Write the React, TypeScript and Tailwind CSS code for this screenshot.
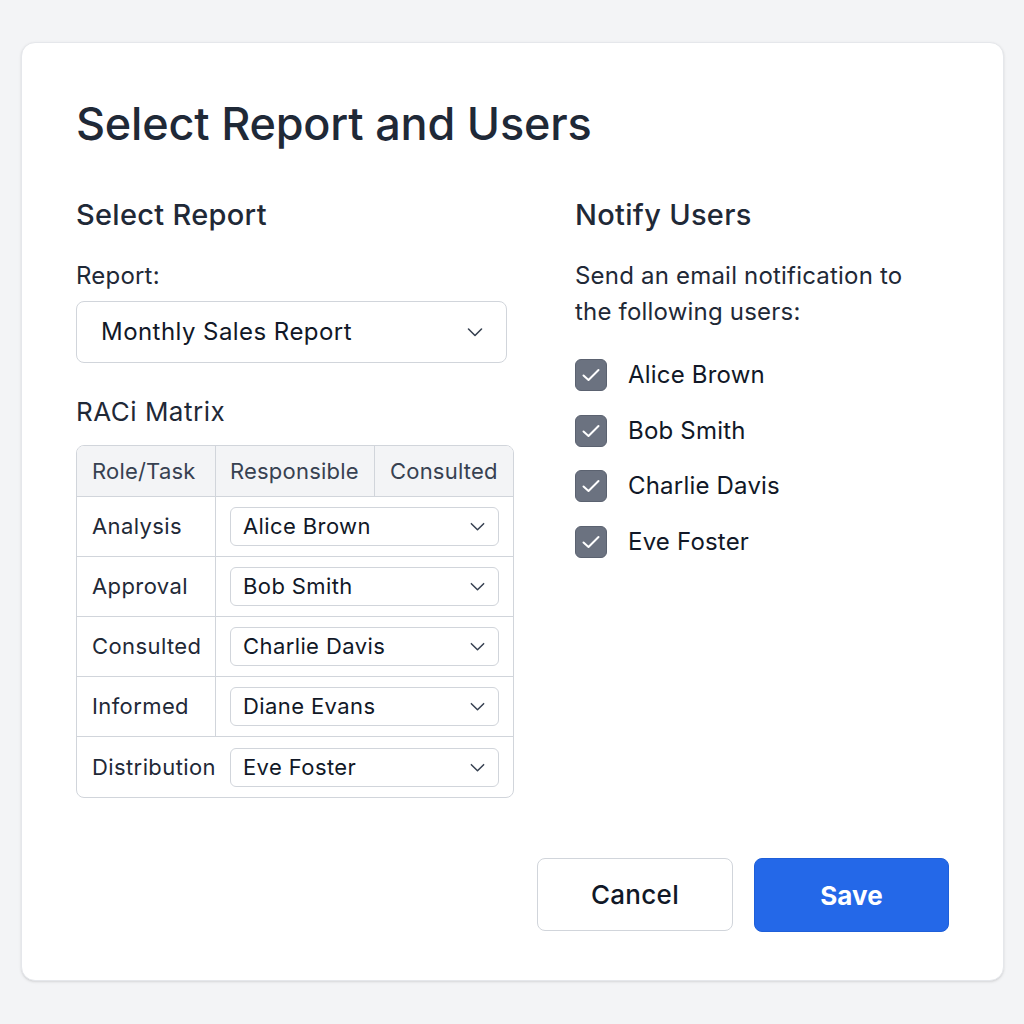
import React from 'react';

const font = {fontFamily: 'Inter, "Noto Sans", sans-serif'};

function Chevron({size = 18}: {size?: number}) {
    return (
        <svg width={size} height={size} viewBox="0 0 18 18" fill="none" stroke="#374151" strokeWidth="1.6" strokeLinecap="round" strokeLinejoin="round">
            <path d="M2.5 6 L9 12.5 L15.5 6"/>
        </svg>
    );
}

function Check() {
    return (
        <div className="w-8 h-8 rounded-[6px] bg-[#6b7280] border border-[#5b6270] flex items-center justify-center shrink-0">
            <svg width="22" height="22" viewBox="0 0 22 22" fill="none" stroke="white" strokeWidth="2" strokeLinecap="round" strokeLinejoin="round">
                <path d="M3.5 11.5 L8.5 16 L18.5 6"/>
            </svg>
        </div>
    );
}

const rows = [
    {task: "Analysis", user: "Alice Brown"},
    {task: "Approval", user: "Bob Smith"},
    {task: "Consulted", user: "Charlie Davis"},
    {task: "Informed", user: "Diane Evans"},
    {task: "Distribution", user: "Eve Foster"},
];

const notify = ["Alice Brown", "Bob Smith", "Charlie Davis", "Eve Foster"];

export default function App() {
    return (
        <div className="min-h-screen bg-[#f3f4f6] pt-[42px] pb-[43px] pl-[21px] pr-[20px]" style={font}>
            <div className="bg-white rounded-[14px] border border-[#e5e7eb] shadow-sm h-[939px] pt-[55px] pl-[54px] pr-[54px] flex flex-col">
                <h1 className="text-[45px] leading-[52px] font-medium text-[#1f2937] tracking-[-0.2px]">Select Report and Users</h1>
                <div className="flex mt-[48px]">
                    <div className="w-[438px]">
                        <h2 className="text-[29px] leading-[34px] font-medium text-[#1f2937] tracking-[0.3px]">Select Report</h2>
                        <div className="mt-[30px] text-[24px] leading-[28px] text-[#1f2937] tracking-[0.2px]">Report:</div>
                        <div className="mt-[11px] w-[431px] h-[62px] border border-[#d1d5db] rounded-[8px] flex items-center justify-between pl-[24px] pr-[22px]">
                            <span className="text-[24px] text-[#111827] tracking-[0.45px]">Monthly Sales Report</span>
                            <Chevron/>
                        </div>
                        <h3 className="mt-[34px] text-[26px] leading-[30px] text-[#1f2937] tracking-[0.5px]">RACi Matrix</h3>
                        <div className="mt-[18px] border border-[#d1d5db] rounded-[8px] overflow-hidden">
                            <div className="grid grid-cols-[139px_159px_1fr] h-[51px] bg-[#f3f4f6] border-b border-[#d1d5db] text-[22px] text-[#374151] tracking-[0.2px]">
                                <div className="flex items-center pl-[15px] border-r border-[#d1d5db]">Role/Task</div>
                                <div className="flex items-center pl-[14px] border-r border-[#d1d5db]">Responsible</div>
                                <div className="flex items-center pl-[15px]">Consulted</div>
                            </div>
                            {rows.map((r, i) => (
                                <div key={r.task} className={`grid grid-cols-[139px_1fr] h-[60px] ${i < rows.length - 1 ? "border-b border-[#d1d5db]" : ""}`}>
                                    <div className={`flex items-center pl-[15px] text-[22px] text-[#1f2937] whitespace-nowrap tracking-[0.4px] ${i < rows.length - 1 ? "border-r border-[#d1d5db]" : ""}`}>{r.task}</div>
                                    <div className="flex items-center pl-[14px] pr-[14px]">
                                        <div className="w-full h-[39px] border border-[#d1d5db] rounded-[6px] flex items-center justify-between pl-[12px] pr-[12px]">
                                            <span className="text-[22px] text-[#111827] tracking-[0.4px]">{r.user}</span>
                                            <Chevron size={17}/>
                                        </div>
                                    </div>
                                </div>
                            ))}
                        </div>
                    </div>
                    <div className="ml-[61px]">
                        <h2 className="text-[29px] leading-[34px] font-medium text-[#1f2937] tracking-[0.3px]">Notify Users</h2>
                        <p className="mt-[26px] text-[24px] leading-[36px] text-[#1f2937] w-[345px] tracking-[0.2px]">Send an email notification to the following users:</p>
                        <div className="mt-[29px] flex flex-col gap-[23.5px]">
                            {notify.map(n => (
                                <div key={n} className="flex items-center gap-[21px] h-8">
                                    <Check/>
                                    <span className="text-[24px] leading-[32px] text-[#111827] tracking-[0.2px]">{n}</span>
                                </div>
                            ))}
                        </div>
                    </div>
                </div>
                <div className="mt-auto mb-[48px] flex justify-end gap-[21px]">
                    <button className="w-[196px] h-[73px] border border-[#d1d5db] rounded-[8px] bg-white text-[26px] font-medium text-[#111827] tracking-[0.3px]">Cancel</button>
                    <button className="w-[195px] h-[74px] rounded-[8px] bg-[#2468e8] border border-[#1e5fd9] text-[26px] font-bold text-white">Save</button>
                </div>
            </div>
        </div>
    );
}
